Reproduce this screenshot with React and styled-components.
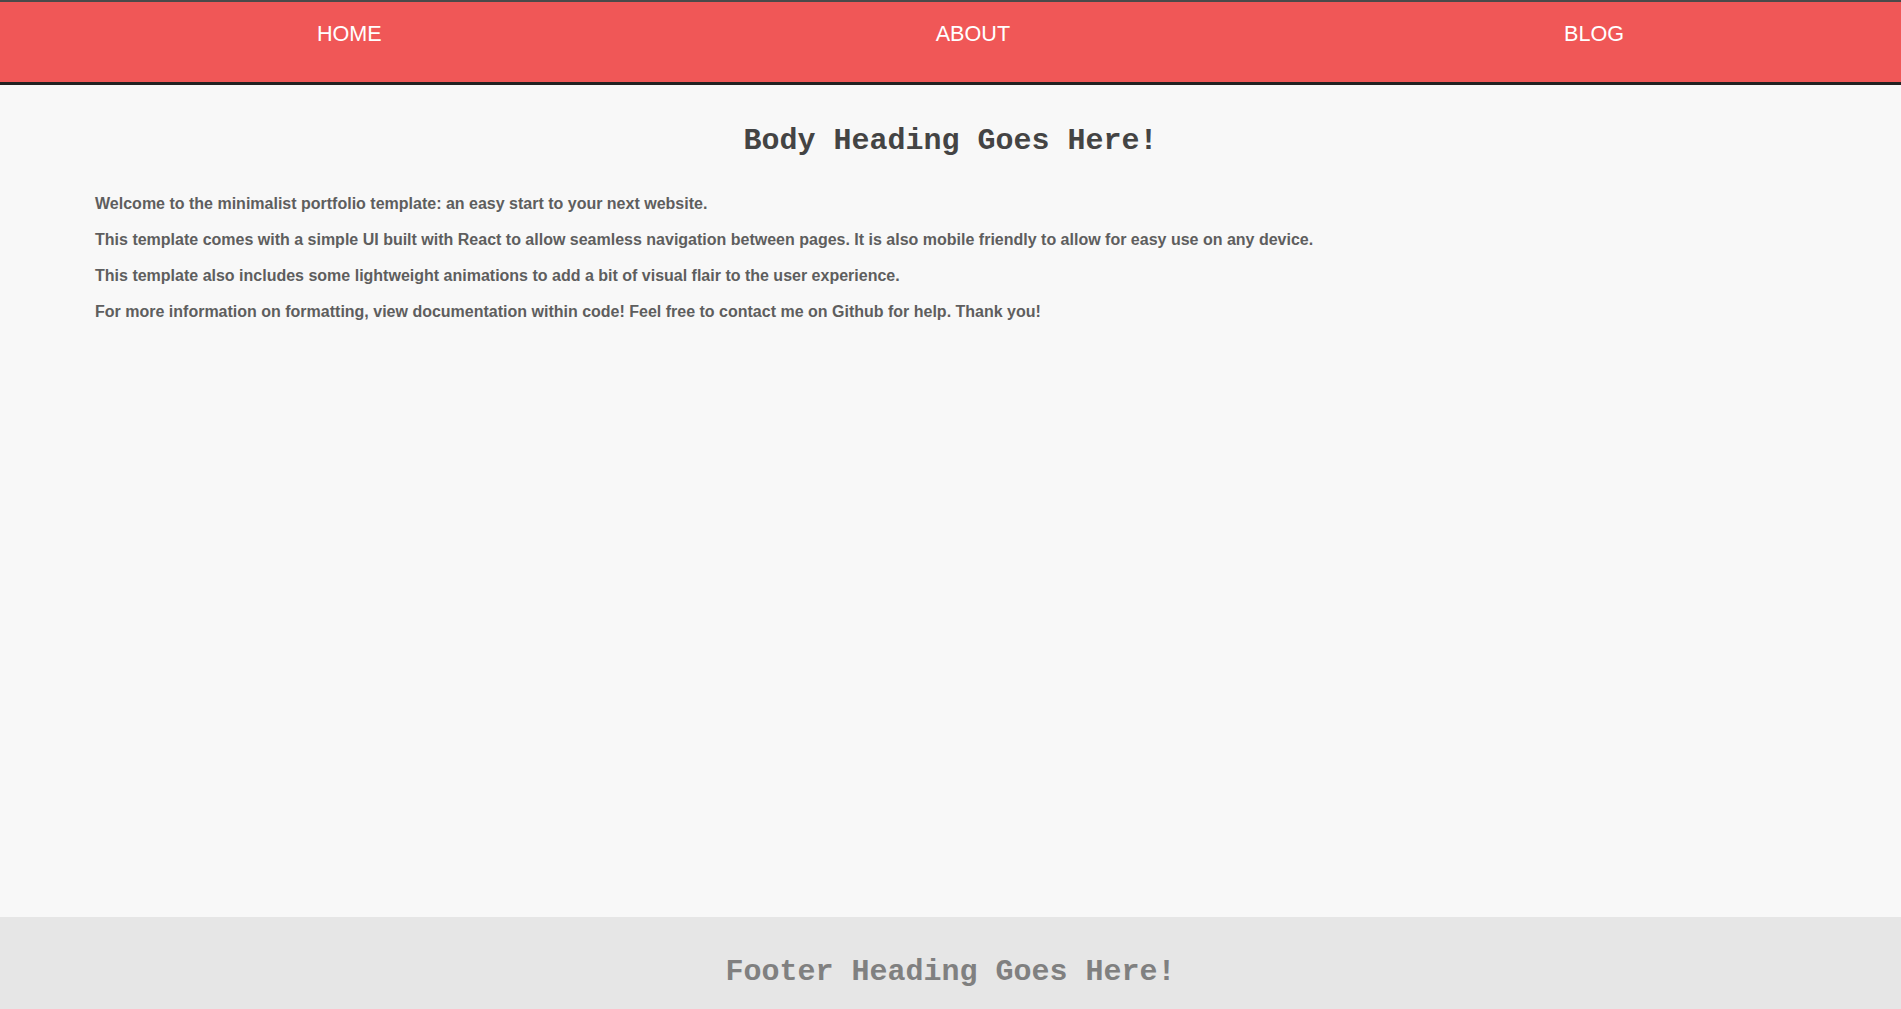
import React from 'react'
import styled, { createGlobalStyle } from 'styled-components'

const GlobalStyle = createGlobalStyle`
    body {
        margin: 0;
        background-color: #f8f8f8;
        font-family: "Liberation Sans", Arial, sans-serif;
    }
`

const Nav = styled.nav`
    background-color: #f05757;
    border-top: 2px solid #4a4a4a;
    border-bottom: 3px solid #222;
`

const NavList = styled.ul`
    margin: 0;
    padding: 19px 0 0 40px;
    height: 80px;
    box-sizing: border-box;
    list-style: none;
    display: flex;
    align-items: flex-start;
    justify-content: space-around;
`

const NavItem = styled.li`
    color: #fff;
    font-size: 21.6px;
    line-height: 25px;
    cursor: pointer;
`

const Main = styled.main`
    min-height: 832px;
    padding: 0 5%;
    box-sizing: border-box;
    overflow: hidden;
`

const Heading = styled.h1`
    margin: 39px 0 37px;
    text-align: center;
    font-family: "Liberation Mono", "Courier New", monospace;
    font-size: 30px;
    font-weight: 700;
    color: ${props => props.muted ? '#808080' : '#444'};
`

const Text = styled.p`
    margin: 0 0 18px;
    font-size: 16px;
    line-height: 18px;
    font-weight: 700;
    color: #5e5e5e;
`

const Footer = styled.footer`
    background-color: #e6e6e6;
    padding: 20px 0 30px;
`

const FooterHeading = styled(Heading)`
    margin: 18px 0;
`

const App = () => {
    return (
        <>
            <GlobalStyle />
            <Nav>
                <NavList>
                    <NavItem>HOME</NavItem>
                    <NavItem>ABOUT</NavItem>
                    <NavItem>BLOG</NavItem>
                </NavList>
            </Nav>
            <Main>
                <Heading>Body Heading Goes Here!</Heading>
                <Text>Welcome to the minimalist portfolio template: an easy start to your next website.</Text>
                <Text>This template comes with a simple UI built with React to allow seamless navigation between pages. It is also mobile friendly to allow for easy use on any device.</Text>
                <Text>This template also includes some lightweight animations to add a bit of visual flair to the user experience.</Text>
                <Text>For more information on formatting, view documentation within code! Feel free to contact me on Github for help. Thank you!</Text>
            </Main>
            <Footer>
                <FooterHeading muted>Footer Heading Goes Here!</FooterHeading>
            </Footer>
        </>
    )
}

export default App
